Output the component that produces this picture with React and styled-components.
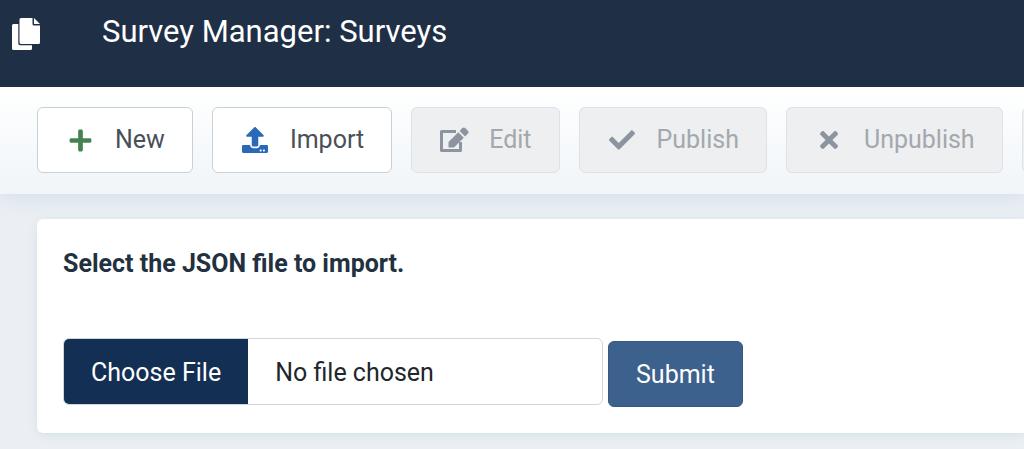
import React from "react"
import styled, { createGlobalStyle } from "styled-components"
import { FaPlus, FaUpload, FaCheck, FaTimes } from "react-icons/fa"

const CopyIcon = () => (
  <svg width="28" height="32" viewBox="0 0 28 32" fill="#fff" aria-hidden="true">
    <path d="M1.5 6H6.3V25.5Q6.3 27.2 8 27.2H20V30.5Q20 32 18.5 32H1.5Q0 32 0 30.5V7.5Q0 6 1.5 6z" />
    <path d="M9 0H20.5V6Q20.5 7.5 22 7.5H28V24.5Q28 26 26.5 26H9Q7.5 26 7.5 24.5V1.5Q7.5 0 9 0z" />
    <path d="M22 0L28 6H22z" />
  </svg>
)

const EditIcon = () => (
  <svg width="29" height="26" viewBox="0 0 29 26" fill="currentColor" aria-hidden="true">
    <path
      d="M16 4.5H1.5V23.5H20.5V15"
      fill="none"
      stroke="currentColor"
      strokeWidth="3"
      strokeLinejoin="round"
    />
    <path d="M8.5 20.5V15L18.3 5.2L23.8 10.7L14 20.5z" />
    <path d="M19.6 3.9L22.4 1.1Q23.8 -0.2 25.2 1.1L27.9 3.8Q29.2 5.2 27.9 6.6L25.1 9.4z" />
  </svg>
)

const actions = [
  { label: "New", icon: FaPlus, color: "#448350", size: 25 },
  { label: "Import", icon: FaUpload, color: "#2a69b8", size: 26 },
  { label: "Edit", icon: EditIcon, disabled: true },
  { label: "Publish", icon: FaCheck, size: 26, disabled: true },
  { label: "Unpublish", icon: FaTimes, size: 26, disabled: true },
]

const App = () => (
  <>
    <GlobalStyle />
    <Header>
      <CopyIcon />
      <Title>Survey Manager: Surveys</Title>
    </Header>
    <Toolbar>
      {actions.map(({ label, icon: Icon, color, size, disabled }) => (
        <ToolbarButton key={label} type="button" disabled={disabled}>
          <IconBox color={color}>
            <Icon size={size} />
          </IconBox>
          {label}
        </ToolbarButton>
      ))}
      <ToolbarButton type="button" disabled />
    </Toolbar>
    <Main>
      <Card onSubmit={e => e.preventDefault()}>
        <Label htmlFor="import-file">Select the JSON file to import.</Label>
        <Row>
          <FileInput id="import-file" type="file" accept=".json" />
          <Submit type="submit">Submit</Submit>
        </Row>
      </Card>
    </Main>
  </>
)
export default App

const GlobalStyle = createGlobalStyle`
  * {
    box-sizing: border-box;
  }
  body {
    margin: 0;
    overflow-x: hidden;
    background: #ebeff3;
    font-family: Roboto, "Liberation Sans", sans-serif;
    font-size: 25px;
    line-height: 38px;
  }
  button, input {
    font: inherit;
  }
`
const Header = styled.header`
  position: relative;
  z-index: 1;
  display: flex;
  align-items: flex-start;
  gap: 62px;
  padding: 13px 12px 36px 12px;
  background: #1f3046;
  svg {
    margin-top: 5px;
    flex-shrink: 0;
  }
`
const Title = styled.h1`
  margin: 0;
  color: #fff;
  font-size: 31px;
  font-weight: 400;
  line-height: 38px;
`
const Toolbar = styled.div`
  display: flex;
  gap: 19px;
  padding: 20px 0 21px 37px;
  overflow: hidden;
  background: linear-gradient(#fff, #f0f5f9);
  box-shadow: 0 4px 20px #d3dfea;
`
const ToolbarButton = styled.button`
  display: flex;
  flex-shrink: 0;
  align-items: center;
  gap: 18px;
  height: 66px;
  padding: 0 27px 0 25px;
  border: 1px solid #c9d0d6;
  border-radius: 6px;
  background: #fff;
  color: #495057;
  cursor: pointer;
  &:disabled {
    border-color: #dde2e6;
    background: #edeff1;
    color: #a3a8ad;
    cursor: default;
  }
`
const IconBox = styled.span`
  display: flex;
  justify-content: center;
  width: 34px;
  color: ${props => (props.color ? props.color : `#8c959f`)};
`
const Main = styled.main`
  padding: 25px 0 16px 37px;
`
const Card = styled.form`
  padding: 26px;
  border-radius: 6px 0 0 6px;
  background: #fff;
  box-shadow: 0 2px 10px #d3dfea;
`
const Label = styled.label`
  display: block;
  color: #22303f;
  font-weight: 700;
`
const Row = styled.div`
  display: flex;
  align-items: flex-end;
  gap: 5px;
  margin-top: 55px;
`
const FileInput = styled.input`
  width: 540px;
  height: 67px;
  margin-bottom: 2px;
  border: 1px solid #cdd7de;
  border-radius: 6px;
  background: #fff;
  color: #22262a;
  overflow: hidden;
  &::file-selector-button {
    height: 65px;
    margin: 0 27px 0 0;
    padding: 2px 27px 0;
    border: 0;
    background: #132f53;
    color: #fff;
    font: inherit;
  }
`
const Submit = styled.button`
  height: 66px;
  padding: 2px 27px 0;
  border: 1px solid #38597f;
  border-radius: 6px;
  background: #3d618d;
  color: #fff;
  cursor: pointer;
`
